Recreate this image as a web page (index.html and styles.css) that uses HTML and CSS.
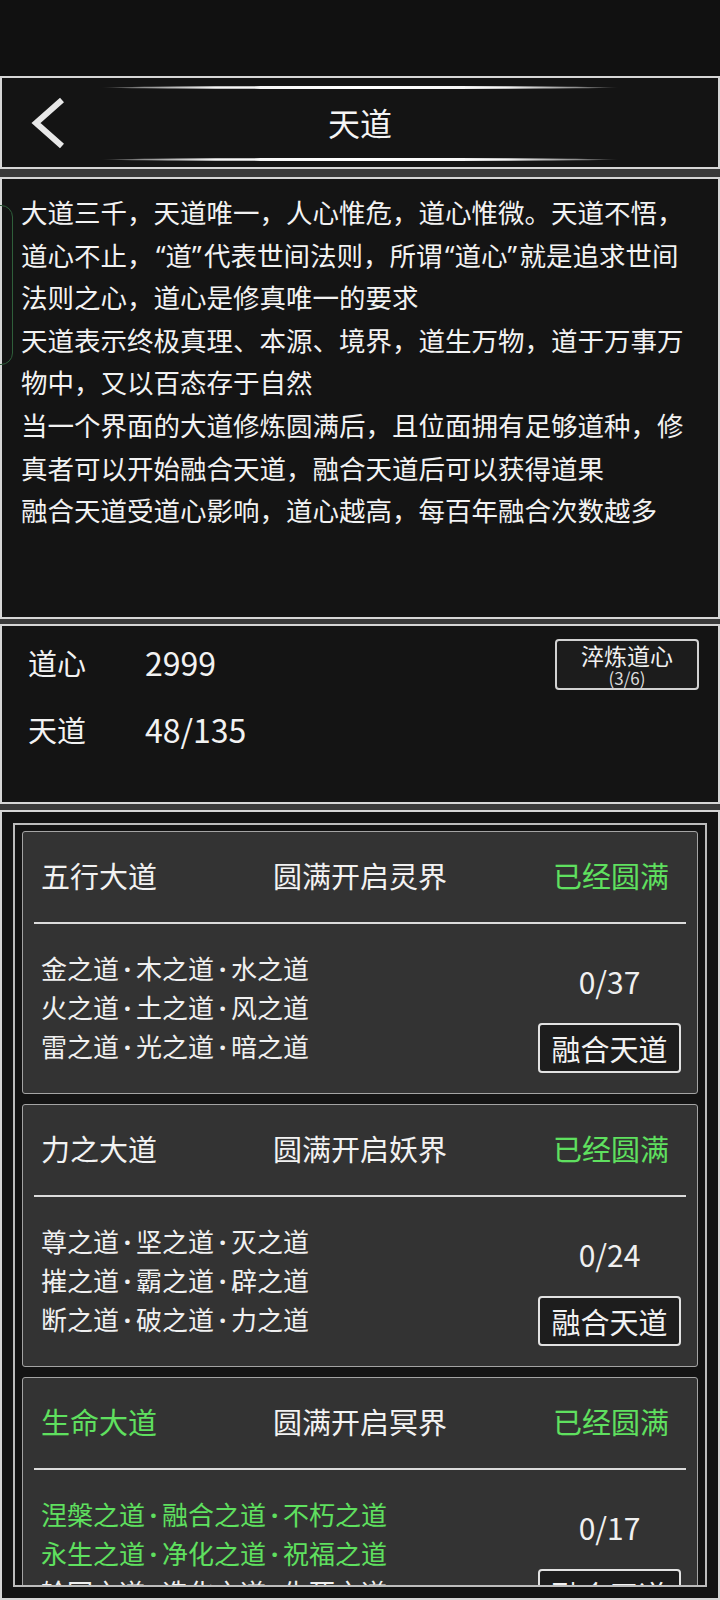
FILE: index.html
```html
<!DOCTYPE html>
<html lang="zh-CN">
<head>
<meta charset="utf-8">
<title>天道</title>
<link rel="stylesheet" href="styles.css">
</head>
<body>
<div class="status"></div>
<div class="stack">
  <header class="box topbar">
    <div class="glow"></div>
    <div class="bar">
      <div class="back">
        <svg width="70" height="67" viewBox="0 0 70 67"><polyline points="60,11 34,34 60,57" fill="none" stroke="#e8e8e8" stroke-width="6" stroke-linejoin="miter"/></svg>
      </div>
      <h1 class="title">天道</h1>
      <div></div>
    </div>
    <div class="glow"></div>
  </header>

  <section class="box intro">
    <div class="tab"></div>
    <p class="line">大道三千，天道唯一，人心惟危，道心惟微。天道不悟，</p>
    <p class="line">道心不止，<span class="q open">“</span>道<span class="q close">”</span>代表世间法则，所谓<span class="q open">“</span>道心<span class="q close">”</span>就是追求世间</p>
    <p class="line">法则之心，道心是修真唯一的要求</p>
    <p class="line">天道表示终极真理、本源、境界，道生万物，道于万事万</p>
    <p class="line">物中，又以百态存于自然</p>
    <p class="line">当一个界面的大道修炼圆满后，且位面拥有足够道种，修</p>
    <p class="line">真者可以开始融合天道，融合天道后可以获得道果</p>
    <p class="line">融合天道受道心影响，道心越高，每百年融合次数越多</p>
  </section>

  <section class="box stats">
    <div class="stat-grid">
      <span class="stat-label">道心</span><span class="stat-value">2999</span>
      <span class="stat-label">天道</span><span class="stat-value">48/135</span>
    </div>
    <button class="refine"><span class="refine-main">淬炼道心</span><span class="refine-sub">(3/6)</span></button>
  </section>

  <section class="box list">
    <div class="frame">
      <div class="card">
        <div class="card-head">
          <span class="name">五行大道</span>
          <span class="realm">圆满开启灵界</span>
          <span class="state green">已经圆满</span>
        </div>
        <div class="divider"></div>
        <div class="card-body">
          <div class="ways">
            <div>金之道<span class="dot">·</span>木之道<span class="dot">·</span>水之道</div>
            <div>火之道<span class="dot">·</span>土之道<span class="dot">·</span>风之道</div>
            <div>雷之道<span class="dot">·</span>光之道<span class="dot">·</span>暗之道</div>
          </div>
          <div class="side">
            <div class="count">0/37</div>
            <button class="fuse">融合天道</button>
          </div>
        </div>
      </div>

      <div class="card">
        <div class="card-head">
          <span class="name">力之大道</span>
          <span class="realm">圆满开启妖界</span>
          <span class="state green">已经圆满</span>
        </div>
        <div class="divider"></div>
        <div class="card-body">
          <div class="ways">
            <div>尊之道<span class="dot">·</span>坚之道<span class="dot">·</span>灭之道</div>
            <div>摧之道<span class="dot">·</span>霸之道<span class="dot">·</span>辟之道</div>
            <div>断之道<span class="dot">·</span>破之道<span class="dot">·</span>力之道</div>
          </div>
          <div class="side">
            <div class="count">0/24</div>
            <button class="fuse">融合天道</button>
          </div>
        </div>
      </div>

      <div class="card">
        <div class="card-head">
          <span class="name green">生命大道</span>
          <span class="realm">圆满开启冥界</span>
          <span class="state green">已经圆满</span>
        </div>
        <div class="divider"></div>
        <div class="card-body">
          <div class="ways">
            <div class="green">涅槃之道<span class="dot">·</span>融合之道<span class="dot">·</span>不朽之道</div>
            <div class="green">永生之道<span class="dot">·</span>净化之道<span class="dot">·</span>祝福之道</div>
            <div>轮回之道<span class="dot">·</span>造化之道<span class="dot">·</span>生死之道</div>
          </div>
          <div class="side">
            <div class="count">0/17</div>
            <button class="fuse">融合天道</button>
          </div>
        </div>
      </div>
    </div>
  </section>
</div>
</body>
</html>
```

FILE: styles.css
```css
* { box-sizing: border-box; }

html, body {
  margin: 0;
  padding: 0;
  background: #111111;
}

body {
  width: 720px;
  height: 1600px;
  overflow: hidden;
  font-family: "Noto Sans CJK SC", "Noto Sans", sans-serif;
  color: #f2f2f2;
}

.status {
  height: 76px;
  background: #111111;
}

.stack {
  background: #3a3a3a;
  display: flex;
  flex-direction: column;
}

.box {
  border: 2px solid #d6d6d6;
  background: #141414;
  position: relative;
}

/* header */
.topbar {
  height: 93px;
  padding-top: 8px;
  display: flex;
  flex-direction: column;
}

.glow {
  width: 518px;
  height: 3px;
  margin: 0 auto;
  border-radius: 50%;
  background: linear-gradient(90deg, rgba(255,255,255,0) 0%, rgba(220,220,220,0.6) 8%, #f4f4f4 22%, #ffffff 50%, #f4f4f4 78%, rgba(220,220,220,0.6) 92%, rgba(255,255,255,0) 100%);
}

.bar {
  height: 67px;
  margin-bottom: 2px;
  display: grid;
  grid-template-columns: 1fr auto 1fr;
  align-items: center;
}

.back svg { display: block; }

.title {
  margin: 0;
  font-size: 32px;
  font-weight: 400;
  line-height: 67px;
  color: #f5f5f5;
}

/* intro */
.intro {
  margin-top: 8px;
  height: 442px;
  padding: 12px 0 0 19px;
}

.line {
  margin: 0;
  font-size: 26.5px;
  line-height: 42.6px;
  white-space: nowrap;
  color: #f2f2f2;
}

.q {
  display: inline-block;
  width: 12px;
  line-height: 1;
  font-family: "Noto Sans", sans-serif;
}

.q.open { text-align: right; }
.q.close { text-align: left; }

.tab {
  position: absolute;
  left: -22px;
  top: 26px;
  width: 33px;
  height: 160px;
  border: 1px solid #2f5f3b;
  border-radius: 12px;
}

/* stats */
.stats {
  margin-top: 5px;
  height: 180px;
  padding: 3px 19px 0 26px;
  display: flex;
  justify-content: space-between;
  align-items: flex-start;
}

.stat-grid {
  display: grid;
  grid-template-columns: 117px auto;
  align-items: center;
}

.stat-label {
  font-size: 29px;
  line-height: 66.5px;
}

.stat-value {
  font-size: 32px;
  line-height: 66.5px;
}

.refine {
  margin-top: 10px;
  width: 144px;
  height: 51px;
  padding: 2px 0 0;
  border: 2px solid #d2d2d2;
  border-radius: 4px;
  background: #1c1c1c;
  color: #f0f0f0;
  font-family: inherit;
  display: flex;
  flex-direction: column;
  align-items: center;
  justify-content: flex-start;
}

.refine-main {
  font-size: 23px;
  line-height: 24px;
}

.refine-sub {
  margin-top: 2px;
  font-size: 17px;
  line-height: 17px;
  color: #dcdcdc;
}

/* list */
.list {
  margin-top: 6px;
  height: 790px;
  padding: 11px;
}

.frame {
  height: 764px;
  border: 2px solid #bdbdbd;
  padding: 6px 7px;
  overflow: hidden;
  display: flex;
  flex-direction: column;
  gap: 10px;
  background: #141414;
}

.card {
  flex-shrink: 0;
  height: 263px;
  border: 1px solid #a4a4a4;
  border-radius: 3px;
  background: #333333;
  overflow: hidden;
}

.card-head {
  height: 90px;
  padding: 0 18px 5px;
  display: grid;
  grid-template-columns: 1fr auto 1fr;
  align-items: center;
  font-size: 29px;
  line-height: 40px;
}

.name { justify-self: start; }
.realm { justify-self: center; }
.state { justify-self: end; padding-right: 10px; }

.green { color: #5fe05f; }

.divider {
  height: 2px;
  margin: 0 11px;
  background: #dcdcdc;
}

.card-body {
  display: flex;
  justify-content: space-between;
  align-items: flex-start;
}

.ways {
  padding: 24px 0 0 18px;
  font-size: 26px;
  line-height: 39px;
  white-space: nowrap;
  color: #f0f0f0;
}

.dot {
  display: inline-block;
  width: 17px;
  line-height: 1;
  text-align: center;
  font-family: "Noto Sans", sans-serif;
  font-weight: 700;
}

.side {
  width: 143px;
  margin-right: 16px;
  padding-top: 37px;
  display: flex;
  flex-direction: column;
  align-items: center;
}

.count {
  font-size: 30px;
  line-height: 40px;
  color: #f0f0f0;
}

.fuse {
  margin-top: 22px;
  width: 143px;
  height: 50px;
  padding: 0;
  border: 2px solid #e2e2e2;
  border-radius: 4px;
  background: #1d1d1d;
  color: #f2f2f2;
  font-family: inherit;
  font-size: 29px;
  line-height: 44px;
}
```
